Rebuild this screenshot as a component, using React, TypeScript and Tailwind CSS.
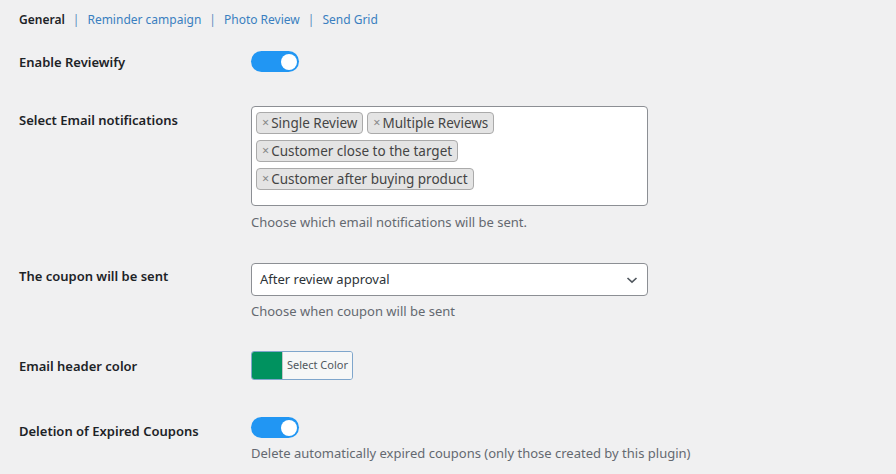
import React from "react";

function Toggle() {
  return (
    <div className="flex h-[21px] w-[48px] items-center justify-end rounded-full bg-[#2196f3] pr-[2px]">
      <div className="h-[16px] w-[16px] rounded-full bg-white" />
    </div>
  );
}

function Tag({ label }: { label: string }) {
  return (
    <span className="flex h-[22px] items-center rounded-[4px] border border-[#aaaaaa] bg-[#e4e4e4] pl-[5px] pr-[5px] text-[13.5px] leading-[20px] text-[#444]">
      <span className="mr-[2px] text-[12.5px] text-[#888]">×</span>
      {label}
    </span>
  );
}

function Label({ children, className = "" }: { children: React.ReactNode; className?: string }) {
  return (
    <div className={"w-[232px] shrink-0 text-[13px] font-semibold leading-[20px] text-[#1d2327] " + className}>
      {children}
    </div>
  );
}

export default function App() {
  const tabs = ["Reminder campaign", "Photo Review", "Send Grid"];

  return (
    <div className="min-h-screen bg-[#f0f0f1] pl-[19px] pt-[12px] font-['Segoe_UI','Noto_Sans',sans-serif] text-[13px] text-[#3c434a]">
      {/* Tabs */}
      <div className="flex h-[16px] items-center text-[12px] leading-[16px]">
        <span className="font-semibold text-[#1d2327]">General</span>
        {tabs.map((t) => (
          <React.Fragment key={t}>
            <span className="px-[8px] text-[#5b8cc0]">|</span>
            <a className="text-[#3a7fc0]">{t}</a>
          </React.Fragment>
        ))}
      </div>

      {/* Enable Reviewify */}
      <div className="mt-[23px] flex items-center">
        <Label>Enable Reviewify</Label>
        <Toggle />
      </div>

      {/* Email notifications */}
      <div className="mt-[34px] flex items-start">
        <Label className="pt-[4px]">Select Email notifications</Label>
        <div>
          <div className="flex h-[100px] w-[397px] flex-col gap-y-[6px] rounded-[4px] border border-[#8c8f94] bg-white pl-[4px] pt-[5px]">
            <div className="flex gap-x-[4px]">
              <Tag label="Single Review" />
              <Tag label="Multiple Reviews" />
            </div>
            <div className="flex">
              <Tag label="Customer close to the target" />
            </div>
            <div className="flex">
              <Tag label="Customer after buying product" />
            </div>
          </div>
          <p className="mt-[6px] leading-[20px] text-[#646970]">Choose which email notifications will be sent.</p>
        </div>
      </div>

      {/* Coupon */}
      <div className="mt-[31px] flex items-start">
        <Label className="pt-[3px]">The coupon will be sent</Label>
        <div>
          <div className="flex h-[33px] w-[397px] items-center justify-between rounded-[4px] border border-[#8c8f94] bg-white pl-[8px] pr-[8px] text-[#2c3338]">
            <span>After review approval</span>
            <svg width="14" height="14" viewBox="0 0 14 14" className="text-[#50575e]">
              <path d="M2.5 5 L7 9.2 L11.5 5" fill="none" stroke="currentColor" strokeWidth="1.6" />
            </svg>
          </div>
          <p className="mt-[5px] leading-[20px] text-[#646970]">Choose when coupon will be sent</p>
        </div>
      </div>

      {/* Email header color */}
      <div className="mt-[30px] flex items-center">
        <Label>Email header color</Label>
        <div className="flex h-[29px] w-[102px] overflow-hidden rounded-[3px] border border-[#7fa6cc]">
          <div className="w-[30px] bg-[#00925f]" />
          <div className="flex flex-1 items-center justify-center border-l border-[#c3c4c7] bg-[#f6f7f7] text-[11px] text-[#50575e]">
            Select Color
          </div>
        </div>
      </div>

      {/* Deletion */}
      <div className="mt-[37px] flex items-start">
        <Label className="pt-[4px]">Deletion of Expired Coupons</Label>
        <div>
          <Toggle />
          <p className="mt-[5px] leading-[20px] text-[#646970]">
            Delete automatically expired coupons (only those created by this plugin)
          </p>
        </div>
      </div>
    </div>
  );
}
